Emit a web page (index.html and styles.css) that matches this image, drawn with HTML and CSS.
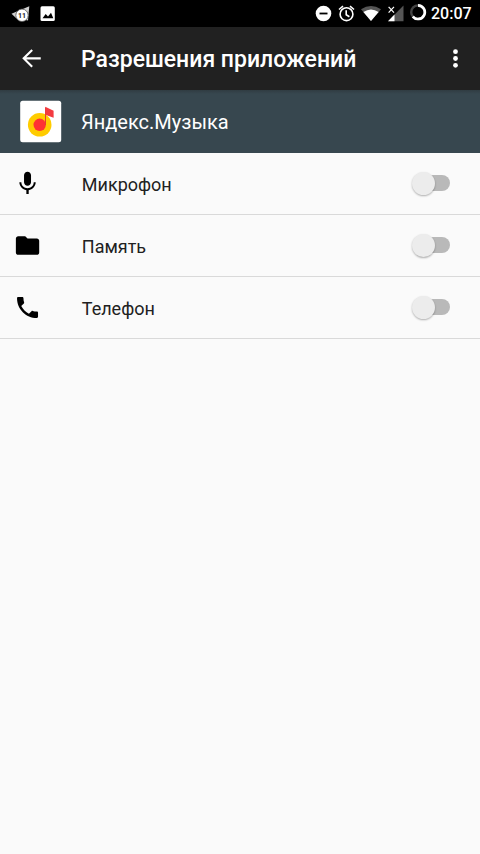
FILE: index.html
```html
<!DOCTYPE html>
<html lang="ru">
<head>
<meta charset="utf-8">
<title>Разрешения приложений</title>
<link rel="stylesheet" href="styles.css">
</head>
<body>
<div class="status">
  <svg class="notifications" width="60" height="27" viewBox="0 0 60 27">
    <path d="M11.5 13.8 29.3 6.3 28 20.5 16 18z" fill="#d0d0d0"/>
    <circle cx="22" cy="15.3" r="6.2" fill="#fff" stroke="#555" stroke-width=".8"/>
    <text x="22" y="18" class="badge">11</text>
    <rect x="40.5" y="6.3" width="14.3" height="14.6" rx="1.5" fill="#fff"/>
    <path d="M42.5 18.2 45.7 14l2.3 2.6 3-3.8 2.3 5.4z" fill="#000"/>
  </svg>
  <svg class="system" width="115" height="27" viewBox="312 0 115 27">
    <circle cx="323.5" cy="13.5" r="7.8" fill="#fff"/>
    <path d="M319.5 13.5h8" stroke="#000" stroke-width="1.8"/>
    <g fill="none" stroke="#fff" stroke-width="1.6">
      <circle cx="346.5" cy="14.2" r="6.4"/>
      <path d="M346.2 10.2v4.5l3.2 2M339 9.5l4-3.3M354 9.5l-4-3.3"/>
    </g>
    <path d="M361 9.3Q371 2.5 381 9.3L371 21z" fill="#555"/>
    <path d="M363.4 12Q371 7 378.6 12L371 21z" fill="#fff"/>
    <path d="M403.5 5.5V21.3H388z" fill="#555"/>
    <path d="M394.5 14.6v6.7H388z" fill="#fff"/>
    <path d="m388.6 6.9 5.4 5.8m0-5.8-5.4 5.8" stroke="#fff" stroke-width="1.2"/>
    <circle cx="418" cy="12.2" r="6.8" fill="none" stroke="#444" stroke-width="2.4"/>
    <path d="M418 5.4a6.8 6.8 0 1 1-5.2 11.2" fill="none" stroke="#fff" stroke-width="2.7"/>
  </svg>
  <span class="clock">20:07</span>
</div>
<header class="toolbar">
  <svg class="back" width="28" height="28" viewBox="0.5 -0.3 24 24"><path d="M20 11.1H7.6l5.7-5.7L12 4.1 4.1 12l7.9 7.9 1.3-1.3-5.7-5.7H20z"/></svg>
  <h1>Разрешения приложений</h1>
  <svg class="more" width="28" height="28" viewBox="0 0 28 28"><circle cx="13.5" cy="7.7" r="2.4"/><circle cx="13.5" cy="14.5" r="2.4"/><circle cx="13.5" cy="21.3" r="2.4"/></svg>
</header>
<section class="app">
  <svg class="logo" width="42" height="43" viewBox="0 0 42 43">
    <rect x=".2" y=".8" width="41" height="41.5" rx="2.5" fill="#fff"/>
    <circle cx="19.7" cy="24.8" r="11.8" fill="#fc0"/>
    <circle cx="19.7" cy="24.8" r="6.2" fill="#f33"/>
    <path d="M25.5 25V7.5" stroke="#e43d30" stroke-width="1"/>
    <path d="m25.3 6.7 8.3 4.1v7l-8.3-3z" fill="#f33b40"/>
  </svg>
  <h2>Яндекс.Музыка</h2>
</section>
<main>
  <div class="row">
    <svg class="icon" viewBox="0.4 -0.4 24 24"><path d="M12 14c1.66 0 2.99-1.34 2.99-3L15 5c0-1.66-1.34-3-3-3S9 3.34 9 5v6c0 1.66 1.34 3 3 3zm5.3-3c0 3-2.54 5.1-5.3 5.1S6.7 14 6.7 11H5c0 3.41 2.72 6.23 6 6.72V21h2v-3.28c3.28-.48 6-3.3 6-6.72h-1.7z"/></svg>
    <span class="label">Микрофон</span>
    <span class="switch"><span class="thumb"></span></span>
  </div>
  <div class="row">
    <svg class="icon" viewBox="0.4 -0.4 24 24"><path d="M10 4H4c-1.1 0-1.99.9-1.99 2L2 18c0 1.1.9 2 2 2h16c1.1 0 2-.9 2-2V8c0-1.1-.9-2-2-2h-8l-2-2z"/></svg>
    <span class="label">Память</span>
    <span class="switch"><span class="thumb"></span></span>
  </div>
  <div class="row">
    <svg class="icon" viewBox="0.4 -0.4 24 24"><path d="M6.62 10.79c1.44 2.83 3.76 5.14 6.59 6.59l2.2-2.2c.27-.27.67-.36 1.02-.24 1.12.37 2.33.57 3.57.57.55 0 1 .45 1 1V20c0 .55-.45 1-1 1-9.39 0-17-7.61-17-17 0-.55.45-1 1-1h3.5c.55 0 1 .45 1 1 0 1.25.2 2.45.57 3.57.11.35.03.74-.25 1.02l-2.2 2.2z"/></svg>
    <span class="label">Телефон</span>
    <span class="switch"><span class="thumb"></span></span>
  </div>
</main>
</body>
</html>
```
FILE: styles.css
```css
* { box-sizing: border-box; }
body {
  margin: 0;
  min-height: 854px;
  background: #fafafa;
  color: #212121;
  font-family: Roboto, "Liberation Sans", sans-serif;
}
svg { display: block; flex: none; }
h1, h2 { margin: 0; white-space: nowrap; }
.status {
  display: flex;
  align-items: center;
  height: 27px;
  background: #000;
  color: #fff;
}
.badge { font-size: 7px; font-weight: 700; text-anchor: middle; fill: #222; }
.system { margin-left: auto; }
.clock {
  width: 49px;
  margin-left: 4px;
  font-size: 16px;
  line-height: 27px;
  font-weight: 500;
}
.toolbar {
  display: flex;
  align-items: center;
  height: 63px;
  padding: 0 10px 1px 18px;
  background: #212121;
  color: #fff;
  fill: #fff;
}
.toolbar h1 {
  margin-left: 35px;
  padding-top: 2px;
  font-size: 23px;
  font-weight: 500;
}
.more { margin-left: auto; }
.app {
  display: flex;
  align-items: center;
  height: 63px;
  padding-left: 20px;
  background: linear-gradient(#303c42, #37474f 4px);
  color: #fff;
}
.app h2 { margin-left: 19px; padding-top: 1px; font-size: 20px; font-weight: 400; }
.row {
  display: flex;
  align-items: center;
  height: 62px;
  padding: 0 30px 1px 14px;
  border-bottom: 1px solid #d9d9d9;
}
.icon { width: 28px; height: 28px; }
.label { margin-left: 39.8px; padding-top: 2px; font-size: 18px; }
.switch {
  display: flex;
  align-items: center;
  width: 37px;
  height: 16px;
  margin-left: auto;
  border-radius: 8px;
  background: #b9b9b9;
}
.thumb {
  width: 23px;
  height: 23px;
  margin-left: -1px;
  flex: none;
  border-radius: 50%;
  background: #ececec;
  box-shadow: 0 1px 2px rgba(0, 0, 0, .3);
}
```
